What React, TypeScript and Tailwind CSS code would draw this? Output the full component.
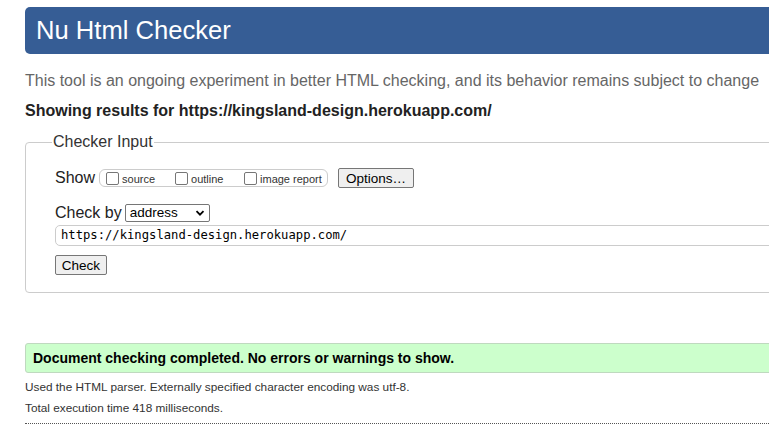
import React from 'react';

const sans = { fontFamily: '"Liberation Sans", Arial, sans-serif' };

function Checkbox({ label }: { label: string }) {
  return (
    <label className="flex items-center">
      <span className="w-[13px] h-[13px] border border-[#767676] rounded-[2px] bg-white" />
      <span className="ml-[3px] mt-[2px] text-[11px] text-[#333]">{label}</span>
    </label>
  );
}

export default function App() {
  return (
    <div className="w-[769px] h-[443px] overflow-hidden bg-white text-black" style={sans}>
      <div className="ml-[25px] w-[800px]">
        <div className="mt-[7px] h-[47px] bg-[#365d95] rounded-l-[5px] flex items-center pl-[11px]">
          <h1 className="text-[25.6px] text-white leading-none">Nu Html Checker</h1>
        </div>

        <p className="mt-[18px] text-[16px] leading-[18px] text-[#666]">
          This tool is an ongoing experiment in better HTML checking, and its behavior remains subject to change
        </p>
        <p className="mt-[12px] text-[16px] leading-[18px] font-bold text-[#222]">
          Showing results for https://kingsland-design.herokuapp.com/
        </p>

        <fieldset className="mt-[13px] border border-[#ccc] rounded-[4px] pl-[29px] pb-[17px]">
          <legend className="-ml-[3px] px-[1px] text-[16px] leading-[18px] text-[#333]">Checker Input</legend>

          <div className="mt-[17px] flex items-center h-[20px]">
            <span className="text-[16px] text-[#222]">Show</span>
            <div className="ml-[4px] h-[18px] w-[229px] border border-[#ccc] rounded-[6px] flex items-center pl-[6px]">
              <div className="w-[69px]"><Checkbox label="source" /></div>
              <div className="w-[69px]"><Checkbox label="outline" /></div>
              <Checkbox label="image report" />
            </div>
            <button className="ml-[10px] h-[20px] w-[76px] border border-[#767676] rounded-[2px] bg-[#efefef] text-[13.5px] text-black">
              Options…
            </button>
          </div>

          <div className="mt-[16px] flex items-center h-[18px]">
            <span className="text-[16px] text-[#222]">Check by</span>
            <div className="ml-[3px] h-[18px] w-[85px] border border-[#767676] rounded-[2px] flex items-center justify-between pl-[4px] pr-[4px]">
              <span className="text-[13.5px] text-black">address</span>
              <svg width="10" height="10" viewBox="0 0 10 10">
                <path d="M1.5 3.2 L5 6.7 L8.5 3.2" fill="none" stroke="#000" strokeWidth="1.8" />
              </svg>
            </div>
          </div>

          <div className="mt-[3px] h-[21px] border border-[#ccc] rounded-[5px] flex items-center pl-[5px]">
            <span className="text-[12.2px] text-black" style={{ fontFamily: '"DejaVu Sans Mono", monospace' }}>
              https://kingsland-design.herokuapp.com/
            </span>
          </div>

          <button className="mt-[9px] block h-[20px] w-[52px] border border-[#767676] rounded-[2px] bg-[#efefef] text-[13.5px] text-black">
            Check
          </button>
        </fieldset>

        <div className="mt-[50px] h-[30px] bg-[#ccffcc] border border-[#bfd9bf] rounded-l-[3px] flex items-center pl-[7px]">
          <p className="text-[14px] font-bold text-black">
            Document checking completed. No errors or warnings to show.
          </p>
        </div>

        <p className="mt-[7px] text-[11.8px] leading-[14px] text-[#333]">
          Used the HTML parser. Externally specified character encoding was utf-8.
        </p>
        <p className="mt-[7px] text-[11.8px] leading-[14px] text-[#333]">Total execution time 418 milliseconds.</p>
        <div className="mt-[8px] border-t border-dotted border-[#555]" />
      </div>
    </div>
  );
}
